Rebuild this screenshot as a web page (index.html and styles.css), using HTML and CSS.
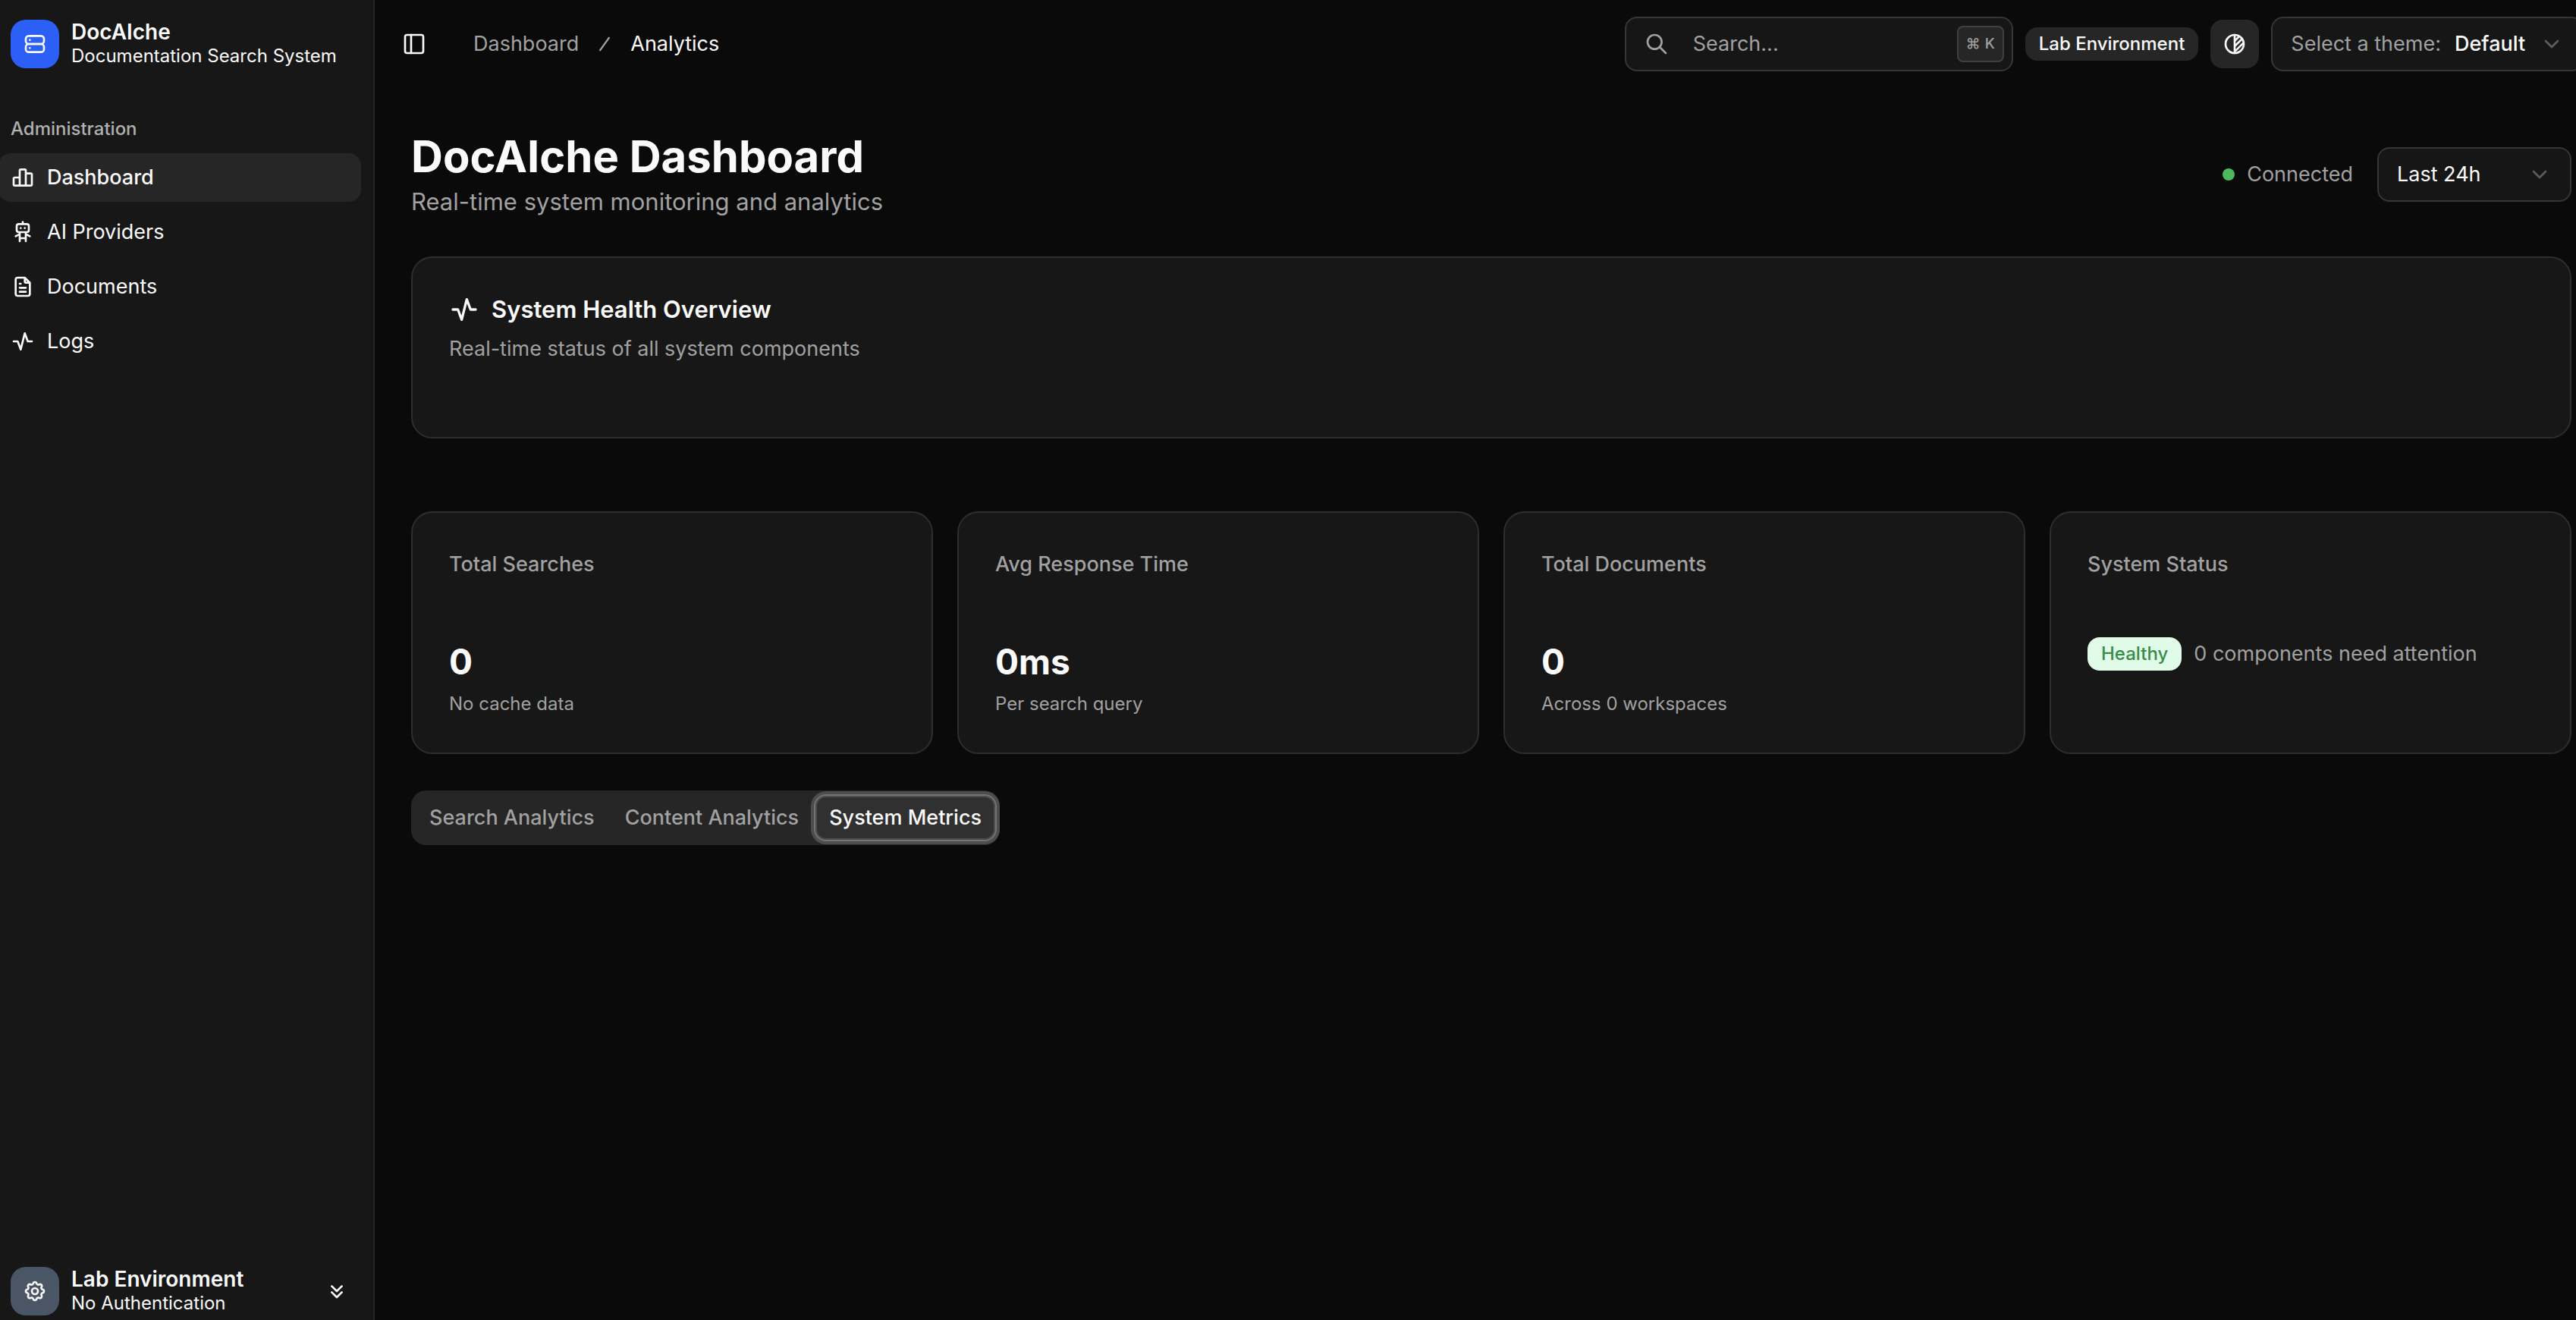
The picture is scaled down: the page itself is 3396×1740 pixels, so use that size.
FILE: index.html
```html
<!DOCTYPE html>
<html lang="en">
<head>
<meta charset="utf-8">
<title>DocAIche Dashboard</title>
<link rel="stylesheet" href="styles.css">
</head>
<body>
<div class="app">
  <aside class="sidebar">
    <a class="identity brand" href="#">
      <span class="tile tile-blue"><svg class="icon" viewBox="0 0 24 24"><rect x="3" y="4" width="18" height="8" rx="3"/><rect x="3" y="12" width="18" height="8" rx="3"/><path d="M7 8v.01M7 16v.01"/></svg></span>
      <span class="identity-text"><strong class="identity-name">DocAIche</strong><span class="identity-note">Documentation Search System</span></span>
    </a>
    <nav class="nav" aria-labelledby="nav-title">
      <h2 class="nav-title" id="nav-title">Administration</h2>
      <a class="nav-item nav-item-active" href="#"><svg class="icon" viewBox="0 0 24 24"><path d="M3 13a1 1 0 0 1 1-1h4a1 1 0 0 1 1 1v6a1 1 0 0 1-1 1H4a1 1 0 0 1-1-1zM15 9a1 1 0 0 1 1-1h4a1 1 0 0 1 1 1v10a1 1 0 0 1-1 1h-4a1 1 0 0 1-1-1zM9 5a1 1 0 0 1 1-1h4a1 1 0 0 1 1 1v14a1 1 0 0 1-1 1h-4a1 1 0 0 1-1-1zM4 20h14"/></svg>Dashboard</a>
      <a class="nav-item" href="#"><svg class="icon" viewBox="0 0 24 24"><path d="M6 4m0 2a2 2 0 0 1 2-2h8a2 2 0 0 1 2 2v4a2 2 0 0 1-2 2H8a2 2 0 0 1-2-2zM12 2v2M9 12v9M15 12v9M5 16l4-2M15 14l4 2M9 18h6M10 8v.01M14 8v.01"/></svg>AI Providers</a>
      <a class="nav-item" href="#"><svg class="icon" viewBox="0 0 24 24"><path d="M14 3v4a1 1 0 0 0 1 1h4M17 21H7a2 2 0 0 1-2-2V5a2 2 0 0 1 2-2h7l5 5v11a2 2 0 0 1-2 2zM9 9h1M9 13h6M9 17h6"/></svg>Documents</a>
      <a class="nav-item" href="#"><svg class="icon" viewBox="0 0 24 24"><path d="M3 12h4l3 8 4-16 3 8h4"/></svg>Logs</a>
    </nav>
    <button class="identity account" type="button">
      <span class="tile tile-slate"><svg class="icon" viewBox="0 0 24 24"><path d="M10.325 4.317c.426-1.756 2.924-1.756 3.35 0a1.724 1.724 0 0 0 2.573 1.066c1.543-.94 3.31.826 2.37 2.37a1.724 1.724 0 0 0 1.065 2.572c1.756.426 1.756 2.924 0 3.35a1.724 1.724 0 0 0-1.066 2.573c.94 1.543-.826 3.31-2.37 2.37a1.724 1.724 0 0 0-2.572 1.065c-.426 1.756-2.924 1.756-3.35 0a1.724 1.724 0 0 0-2.573-1.066c-1.543.94-3.31-.826-2.37-2.37a1.724 1.724 0 0 0-1.065-2.572c-1.756-.426-1.756-2.924 0-3.35a1.724 1.724 0 0 0 1.066-2.573c-.94-1.543.826-3.31 2.37-2.37 1 .608 2.296.07 2.572-1.065z"/><circle cx="12" cy="12" r="3"/></svg></span>
      <span class="identity-text"><strong class="identity-name">Lab Environment</strong><span class="identity-note">No Authentication</span></span>
      <svg class="icon" viewBox="0 0 24 24"><path d="M7 7l5 5 5-5M7 13l5 5 5-5"/></svg>
    </button>
  </aside>

  <div class="main">
    <header class="topbar">
      <button class="plain-button" type="button" aria-label="Toggle sidebar"><svg class="icon" viewBox="0 0 24 24"><rect x="3" y="3" width="18" height="18" rx="2"/><path d="M9 3v18"/></svg></button>
      <nav class="crumbs" aria-label="Breadcrumb">
        <a class="crumb" href="#">Dashboard</a>
        <svg class="icon crumb-slash" viewBox="0 0 24 24"><path d="M17 5L7 19"/></svg>
        <span class="crumb-current">Analytics</span>
      </nav>
      <div class="tools">
        <button class="field search" type="button">
          <svg class="icon" viewBox="0 0 24 24"><circle cx="10" cy="10" r="7"/><path d="M21 21l-6-6"/></svg>
          <span class="search-text">Search...</span>
          <kbd class="shortcut"><span>⌘</span><span>K</span></kbd>
        </button>
        <span class="badge">Lab Environment</span>
        <button class="theme-button" type="button" aria-label="Toggle brightness"><svg class="icon" viewBox="0 0 24 24"><circle cx="12" cy="12" r="9"/><path d="M12 3v18M12 9l4.65-4.65M12 14.3l7.37-7.37M12 19.6l8.85-8.85"/></svg></button>
        <div class="field theme">
          <label class="theme-label" for="theme">Select a theme:</label>
          <select class="select select-medium" id="theme"><option>Default</option></select>
          <svg class="icon chevron" viewBox="0 0 24 24"><path d="M6 9l6 6 6-6"/></svg>
        </div>
      </div>
    </header>

    <main class="content">
      <div class="page-head">
        <div>
          <h1 class="page-title">DocAIche Dashboard</h1>
          <p class="page-note">Real-time system monitoring and analytics</p>
        </div>
        <div class="page-tools">
          <span class="connection"><span class="dot"></span>Connected</span>
          <div class="field range">
            <select class="select range-select" aria-label="Time range"><option>Last 24h</option></select>
            <svg class="icon chevron" viewBox="0 0 24 24"><path d="M6 9l6 6 6-6"/></svg>
          </div>
        </div>
      </div>

      <section class="card health">
        <h2 class="health-title"><svg class="icon icon-large" viewBox="0 0 24 24"><path d="M3 12h4l3 8 4-16 3 8h4"/></svg>System Health Overview</h2>
        <p class="health-note">Real-time status of all system components</p>
      </section>

      <section class="stats">
        <article class="card stat"><h3 class="stat-title">Total Searches</h3><p class="stat-value">0</p><p class="stat-note">No cache data</p></article>
        <article class="card stat"><h3 class="stat-title">Avg Response Time</h3><p class="stat-value">0ms</p><p class="stat-note">Per search query</p></article>
        <article class="card stat"><h3 class="stat-title">Total Documents</h3><p class="stat-value">0</p><p class="stat-note">Across 0 workspaces</p></article>
        <article class="card stat"><h3 class="stat-title">System Status</h3><p class="stat-status"><span class="badge badge-green">Healthy</span>0 components need attention</p></article>
      </section>

      <div class="tabs" role="tablist">
        <button class="tab" type="button" role="tab" aria-selected="false">Search Analytics</button>
        <button class="tab" type="button" role="tab" aria-selected="false">Content Analytics</button>
        <button class="tab tab-active" type="button" role="tab" aria-selected="true">System Metrics</button>
      </div>
    </main>
  </div>
</div>
</body>
</html>
```
FILE: styles.css
```css
:root {
  --bg: #0a0a0a;
  --panel: #171717;
  --raised: #262626;
  --line: #2e2e2e;
  --field: #161616;
  --field-line: #363636;
  --text: #fafafa;
  --muted: #a1a1a1;
}

* { box-sizing: border-box; }

body {
  margin: 0;
  overflow-x: hidden;
  background: var(--bg);
  color: var(--text);
  font: 400 27px/40px Inter, "Liberation Sans", sans-serif;
}

h1, h2, h3, p { margin: 0; }
a { color: inherit; text-decoration: none; }

button, select {
  margin: 0;
  padding: 0;
  border: 0;
  background: none;
  color: inherit;
  font: inherit;
}

.icon {
  flex: none;
  width: 32px;
  height: 32px;
  fill: none;
  stroke: currentColor;
  stroke-width: 2;
  stroke-linecap: round;
  stroke-linejoin: round;
}
.icon-large { width: 40px; height: 40px; }

/* The shell bleeds past both window edges. */
.app {
  display: flex;
  min-height: 100vh;
  margin: 0 -42px 0 -18px;
}

.sidebar {
  display: flex;
  flex: none;
  flex-direction: column;
  width: 512px;
  height: 100vh;
  padding: 26px 16px 6px;
  border-right: 2px solid var(--raised);
  background: var(--panel);
}

.identity {
  display: flex;
  align-items: center;
  gap: 16px;
  padding: 0 16px;
  text-align: left;
}
.tile {
  display: grid;
  flex: none;
  place-items: center;
  width: 64px;
  height: 64px;
  border-radius: 20px;
}
.tile-blue { background: #2b5ff6; }
.tile-slate { background: #4a5565; }
.identity-text { display: grid; flex: 1; }
.identity-name { font-size: 28px; font-weight: 600; line-height: 32px; }
.identity-note { font-size: 24px; line-height: 32px; }

.nav {
  display: flex;
  flex: 1;
  flex-direction: column;
  gap: 8px;
  padding-top: 56px;
}
.nav-title {
  padding: 0 16px;
  color: #b0b0b0;
  font-size: 24px;
  font-weight: 500;
  line-height: 48px;
}
.nav-item {
  display: flex;
  align-items: center;
  gap: 16px;
  height: 64px;
  padding: 0 16px;
  border-radius: 16px;
}
.nav-item-active { background: var(--raised); font-weight: 500; }

.main { flex: 1; min-width: 0; }

.topbar {
  display: flex;
  align-items: center;
  height: 116px;
  padding: 0 32px 0 36px;
}
.plain-button { display: grid; }
.crumbs {
  display: flex;
  align-items: center;
  gap: 20px;
  margin-left: 62px;
}
.crumb, .crumb-slash { color: var(--muted); }
.crumb-slash { width: 28px; height: 28px; }

.tools {
  display: flex;
  align-items: center;
  gap: 16px;
  margin-left: auto;
}
.field {
  display: flex;
  align-items: center;
  height: 72px;
  border: 2px solid var(--field-line);
  border-radius: 16px;
  background: var(--field);
}
.search {
  gap: 32px;
  width: 512px;
  padding: 0 10px 0 24px;
  color: var(--muted);
}
.search-text { flex: 1; text-align: left; }
.shortcut {
  display: flex;
  align-items: center;
  gap: 6px;
  height: 48px;
  padding: 0 10px;
  border: 2px solid #404040;
  border-radius: 8px;
  background: var(--raised);
  font: 500 19px/28px Inter, sans-serif;
}
.badge {
  padding: 6px 18px;
  border-radius: 16px;
  background: var(--raised);
  font-size: 24px;
  font-weight: 500;
  line-height: 32px;
}
.badge-green { background: #e0fbe8; color: #3a8a48; }
.theme-button {
  display: grid;
  place-items: center;
  width: 64px;
  height: 64px;
  border-radius: 16px;
  background: var(--raised);
}
.theme { gap: 18px; padding: 0 24px; }
.theme-label { color: var(--muted); }
.select { appearance: none; outline: 0; }
.select-medium { font-weight: 500; }
.chevron { color: #5c5c5c; }

.content { padding: 54px 48px; }

.page-head {
  display: flex;
  align-items: center;
  justify-content: space-between;
}
.page-title { font-size: 58px; font-weight: 700; line-height: 72px; }
.page-note { color: var(--muted); font-size: 31px; line-height: 48px; }
.page-tools { display: flex; align-items: center; gap: 32px; }
.connection { display: flex; align-items: center; gap: 16px; color: var(--muted); }
.dot { width: 16px; height: 16px; border-radius: 50%; background: #4db85c; }
.range { width: 256px; padding: 0 24px; }
.range-select { flex: 1; }

.card {
  border: 2px solid var(--line);
  border-radius: 28px;
  background: var(--panel);
}
.health { margin-top: 48px; padding: 48px 48px 96px; }
.health-title {
  display: flex;
  align-items: center;
  gap: 16px;
  font-size: 31px;
  font-weight: 600;
  line-height: 40px;
}
.health-note { margin-top: 12px; color: var(--muted); }

.stats {
  display: grid;
  grid-template-columns: repeat(4, 1fr);
  gap: 32px;
  margin-top: 96px;
}
.stat { min-height: 320px; padding: 48px; }
.stat-title { color: var(--muted); font-size: 27px; font-weight: 500; }
.stat-value { margin-top: 76px; font-size: 46px; font-weight: 700; line-height: 64px; }
.stat-note { margin-top: 8px; color: var(--muted); font-size: 24px; line-height: 32px; }
.stat-status {
  display: flex;
  align-items: center;
  gap: 16px;
  margin-top: 76px;
  color: var(--muted);
}

.tabs {
  display: inline-flex;
  align-items: center;
  height: 72px;
  margin-top: 48px;
  padding: 4px;
  border-radius: 20px;
  background: var(--raised);
}
.tab {
  height: 62px;
  padding: 0 18px;
  border: 2px solid transparent;
  border-radius: 16px;
  color: var(--muted);
  font-weight: 500;
}
.tab-active {
  border-color: #737373;
  background: #303030;
  box-shadow: 0 0 0 4px #4d4d4d, inset 0 0 0 2px #4d4d4d;
  color: var(--text);
}
```
